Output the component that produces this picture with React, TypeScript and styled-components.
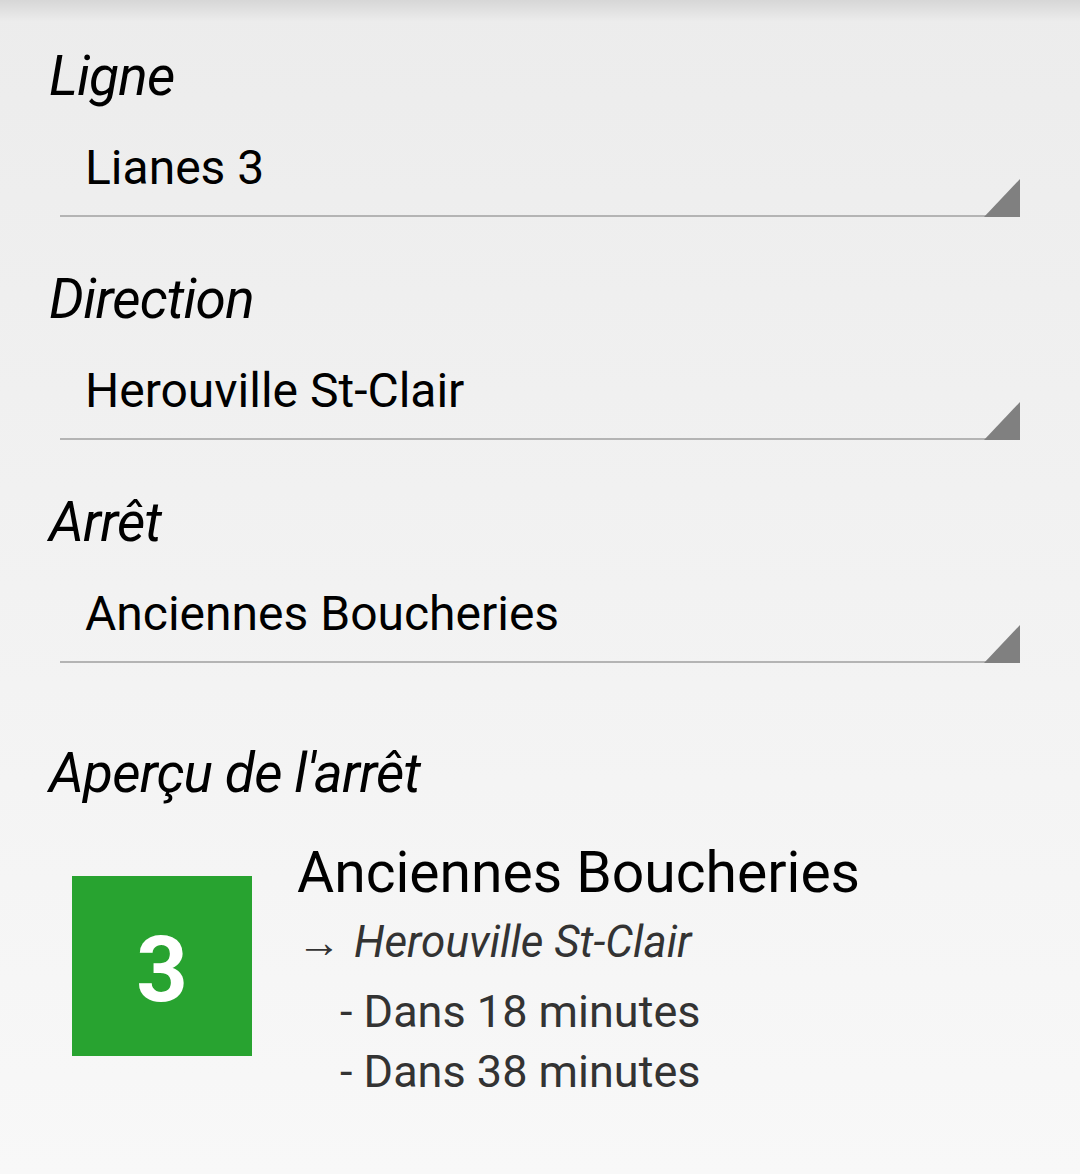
import React from 'react';
import styled, { createGlobalStyle } from 'styled-components';

const GlobalStyle = createGlobalStyle`
  html, body {
    margin: 0;
    padding: 0;
  }
  body {
    font-family: Roboto, "Noto Sans", "Liberation Sans", sans-serif;
    background: #f7f7f7;
  }
`;

const Screen = styled.div`
  position: relative;
  width: 1080px;
  min-height: 1174px;
  box-sizing: border-box;
  padding: 44px 0 0 49px;
  background: linear-gradient(to bottom, #ececec 0%, #f2f2f2 50%, #f8f8f8 100%);
  &::before {
    content: '';
    position: absolute;
    left: 0;
    right: 0;
    top: 0;
    height: 22px;
    background: linear-gradient(to bottom, rgba(0, 0, 0, 0.09), rgba(0, 0, 0, 0));
  }
`;

const Field = styled.section`
  & + & {
    margin-top: 50px;
  }
`;

const Label = styled.h2<{ $gap?: number }>`
  margin: ${({ $gap }) => $gap ?? 0}px 0 0;
  font-size: 55px;
  line-height: 64px;
  letter-spacing: -0.8px;
  font-weight: 400;
  font-style: italic;
  color: #000;
`;

const Spinner = styled.div`
  position: relative;
  width: 960px;
  margin: 28px 0 0 11px;
  padding: 0 0 15px 25px;
  box-sizing: border-box;
  border-bottom: 2px solid #b4b4b4;
  font-size: 48px;
  line-height: 64px;
  color: #000;
  &::after {
    content: '';
    position: absolute;
    right: 0;
    bottom: -2px;
    width: 0;
    height: 0;
    border-style: solid;
    border-width: 0 0 38px 36px;
    border-color: transparent transparent #808080 transparent;
  }
`;

const Preview = styled.div`
  display: flex;
  align-items: flex-start;
  margin: 36px 0 0 23px;
`;

const LineBadge = styled.div<{ $color: string }>`
  flex: none;
  width: 180px;
  height: 180px;
  margin-top: 35px;
  padding-top: 9px;
  box-sizing: border-box;
  display: flex;
  align-items: center;
  justify-content: center;
  background: ${({ $color }) => $color};
  color: #fff;
  font-size: 90px;
  font-weight: 700;
`;

const StopInfo = styled.div`
  margin-left: 45px;
  display: flex;
  flex-direction: column;
`;

const StopName = styled.div`
  font-size: 57px;
  line-height: 64px;
  color: #000;
`;

const Heading = styled.div`
  margin-top: 7px;
  font-size: 44px;
  line-height: 60px;
  color: #333;
  em {
    margin-left: 13px;
  }
`;

const Departures = styled.ul`
  list-style: none;
  margin: 10px 0 0 43px;
  padding: 0;
  li {
    font-size: 45px;
    line-height: 60px;
    color: #333;
  }
`;

const fields = [
  { label: 'Ligne', value: 'Lianes 3' },
  { label: 'Direction', value: 'Herouville St-Clair' },
  { label: 'Arrêt', value: 'Anciennes Boucheries' },
];

const departures = [18, 38];

export default function App() {
  return (
    <>
      <GlobalStyle />
      <Screen>
        {fields.map((f) => (
          <Field key={f.label}>
            <Label>{f.label}</Label>
            <Spinner>{f.value}</Spinner>
          </Field>
        ))}
        <Label $gap={78}>Aperçu de l'arrêt</Label>
        <Preview>
          <LineBadge $color="#28a330">3</LineBadge>
          <StopInfo>
            <StopName>Anciennes Boucheries</StopName>
            <Heading>
              →<em>Herouville St-Clair</em>
            </Heading>
            <Departures>
              {departures.map((m) => (
                <li key={m}>- Dans {m} minutes</li>
              ))}
            </Departures>
          </StopInfo>
        </Preview>
      </Screen>
    </>
  );
}
